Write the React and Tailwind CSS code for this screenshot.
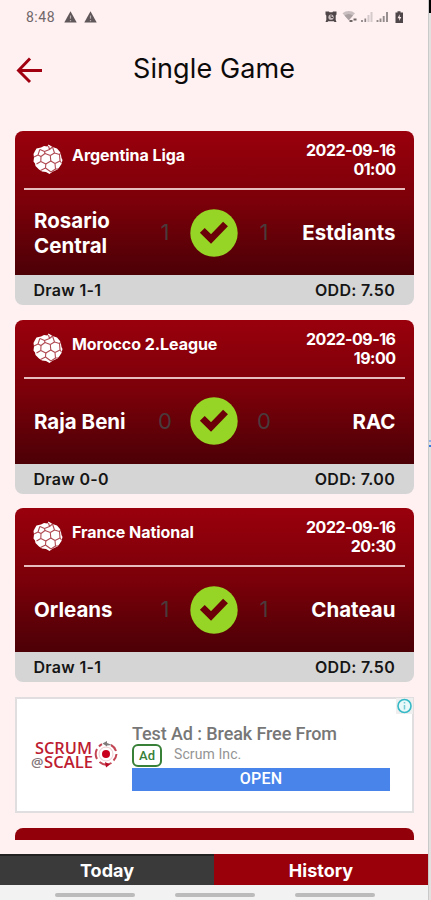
import React from 'react';

const games = [
    { league: 'Argentina Liga', time: '01:00', home: 'Rosario Central', away: 'Estdiants', score: [1, 1], odd: '7.50' },
    { league: 'Morocco 2.League', time: '19:00', home: 'Raja Beni', away: 'RAC', score: [0, 0], odd: '7.00' },
    { league: 'France National', time: '20:30', home: 'Orleans', away: 'Chateau', score: [1, 1], odd: '7.50' },
];

const WarningIcon = () => (
    <svg className="w-[13px] h-[12px]" viewBox="0 0 13 12">
        <path d="M6.5 0.3L12.7 11.6H0.3Z" fill="#5f5759" />
        <path d="M6.5 4.500v3.300M6.5 9v1.200" stroke="#b5aaac" strokeWidth="1.200" />
    </svg>
);

const StatusIcons = () => (
    <svg className="w-[80px] h-[14px]" viewBox="0 0 80 14">
        {/* alarm */}
        <path d="M0.5 1.500h3.500l0.500 0.800h3l0.500-0.800h3.500v3l-0.800 1v4.500l0.800 2h-2l-0.700-0.700h-5.600l-0.700 0.700h-2l0.800-2v-4.500l-0.800-1z" fill="#4e4648" />
        <circle cx="6" cy="7.200" r="2.600" fill="#c9bdbf" />
        <path d="M6 5v2.500h2" stroke="#4e4648" fill="none" />
        {/* wifi */}
        <path d="M17.500 3.200a10 10 0 0 1 12.500 0l-6.300 7z" fill="#c9bfc1" />
        <path d="M19.500 5.500a6.500 6.500 0 0 1 8.500 0l-4.200 4.700z" fill="#aaa0a2" />
        <path d="M24.500 11h3M28.500 9.500h3" stroke="#6e6567" strokeWidth="2" />
        {/* signals */}
        <path d="M37 12v-2M40.300 12v-3.500" stroke="#8b8284" strokeWidth="1.700" />
        <path d="M43.500 12V5M46.500 12V2" stroke="#d5cacc" strokeWidth="2" />
        <path d="M52.500 12v-2M55.500 12V8.500M58.700 12V6M62 12V2" stroke="#938a8c" strokeWidth="1.900" />
        {/* battery */}
        <path d="M72.500 1.200h3v1.300h2.500v10.500h-7.500v-10.500h2z" fill="#4e4648" />
        <path d="M74.700 4.300l-2.200 4h1.700v2.700l2.100-3.900h-1.600z" fill="#fbeaec" />
    </svg>
);

const BallIcon = () => (
    <svg className="w-[30px] h-[30px] shrink-0" viewBox="0 0 30 30" strokeLinejoin="round">
        {/* silhouette with the seams drawn over it */}
        <path d="M3.500 4.500L8 3.500 11 2 14.500 2.500 15.500 0.500 18 2 19.500 3 24 4.500 27 8 28 11 28.500 14 29.500 16 28.500 20 26.500 23 24.500 25.500 20 27.500 16.500 30 13 28 9 27.500 6 25.500 2.500 22 2 19.500 0.500 17.500 1 13.500 0.500 10 2 7z" fill="#fff" />
        <g fill="none" stroke="#b04a52" strokeWidth="1.100">
            <path d="M12 9.500L17.300 11.500 17.800 17 12.800 20 7.800 17.500 8 12.500z" />
            <path d="M12 9.500L11.500 7.500M11.500 7.500L7 5.500M11.500 7.500L16.500 5.500M16.500 5.500L15.500 2M16.500 5.500L19.500 3" />
            <path d="M8 12.500L5 11M5 11L6.800 5.500M5 11L1 13" />
            <path d="M17.300 11.500L21.500 9M21.500 9L19.500 3M21.500 9L26.500 10.500M26.500 10.500L28 9M26.500 10.500L27 17" />
            <path d="M17.800 17L22 19.500M22 19.500L27 17M27 17L28.500 19M22 19.500L22.500 25M22.500 25L18 28M22.500 25L25 25" />
            <path d="M12.800 20L12.500 24M12.500 24L7.500 26.500M12.500 24L18 28M7.800 17.500L3.500 20" />
        </g>
    </svg>
);

const CheckIcon = () => (
    <svg className="w-12 h-12 shrink-0" viewBox="0 0 48 48">
        <circle cx="24" cy="24" r="23.700" fill="#96d425" />
        <path d="M12.300 21.300L21 30 35.500 15" fill="none" stroke="#6c0008" strokeWidth="6.800" />
    </svg>
);

const GameCard = ({ game }) => (
    <div className="h-[174px] mb-[14.500px] rounded-[8px] overflow-hidden flex flex-col">
        <div className="h-[144px] px-[9px] bg-linear-to-b from-[#99000c] via-[#7b0009] to-[#4c0006] text-white flex flex-col">
            <div className="h-[59px] pl-[9px] pr-[9px] flex justify-between border-b-2 border-[#e6bcbf]">
                <div className="flex">
                    <div className="mt-[13px]"><BallIcon /></div>
                    <p className="ml-[9px] mt-[13px] text-[16px] leading-[22px] font-bold tracking-[-0.05px] whitespace-nowrap">{game.league}</p>
                </div>
                <div className="mt-[10px] text-[16px] leading-[19px] font-bold tracking-[-0.5px] text-right whitespace-nowrap">
                    <p>2022-09-16</p>
                    <p>{game.time}</p>
                </div>
            </div>
            <div className="h-[85px] pl-[10px] pr-[9px] flex items-center">
                <p className="w-[119px] text-[20.500px] leading-[25px] font-bold">{game.home}</p>
                <p className="w-[24px] text-[22px] text-center text-[#4a3a3c]">{game.score[0]}</p>
                <div className="ml-[13px] mr-[14px]"><CheckIcon /></div>
                <p className="w-[24px] text-[22px] text-center text-[#4a3a3c]">{game.score[1]}</p>
                <p className="flex-1 text-[20.500px] leading-[25px] font-bold text-right">{game.away}</p>
            </div>
        </div>
        <div className="h-[30px] px-[18.500px] bg-[#d5d5d5] text-[#151515] text-[16px] font-semibold flex items-center justify-between">
            <p className="tracking-[0.3px]">Draw {game.score.join('-')}</p>
            <p className="tracking-[0.3px]">ODD: {game.odd}</p>
        </div>
    </div>
);

const ScrumLogo = () => (
    <svg className="w-[90px] h-[32px] font-['Open_Sans',sans-serif] font-semibold" viewBox="0 0 90 32" fill="none">
        <text x="4" y="14" fontSize="16.500" textLength="57" lengthAdjust="spacingAndGlyphs" fill="#bd1c31">SCRUM</text>
        <text x="0" y="26.500" fontSize="13" textLength="12.500" lengthAdjust="spacingAndGlyphs" fill="#85787b">@</text>
        <text x="13" y="27.500" fontSize="16.500" textLength="49" lengthAdjust="spacingAndGlyphs" fill="#bd1c31">SCALE</text>
        <g transform="translate(63 0)">
            <circle cx="12" cy="14" r="4" fill="#c9001d" />
            <circle cx="12" cy="14" r="7" stroke="#e8bac1" strokeWidth="0.800" />
            <path d="M3 19a10.500 10.500 0 0 1 0-10M5 6.500a10.500 10.500 0 0 1 3-2.300M17 5a10.500 10.500 0 0 1 5 6M22.500 14a10.500 10.500 0 0 1-3 6.500M17.500 23a10.500 10.500 0 0 1-12-1" stroke="#c44655" strokeWidth="2" />
            <path d="M8.500 3.500L13 1v2l5 2-5 0.500v1z" fill="#817b7c" />
            <path d="M11 22l5 2.500-4 3z" fill="#b90823" />
        </g>
    </svg>
);

const AdBanner = () => (
    <div className="relative mt-[1.500px] h-[116px] bg-white border-2 border-[#e1dedf] flex pl-[14px] font-[Roboto,sans-serif]">
        <div className="w-[101px] pt-[41px]"><ScrumLogo /></div>
        <div className="w-[258px] pt-[24px]">
            <p className="text-[18px] leading-[21px] font-medium text-[#777] tracking-[-0.1px] whitespace-nowrap">Test Ad : Break Free From</p>
            <div className="flex items-center h-[24px]">
                <span className="w-[30px] h-[23px] rounded-[6px] border-2 border-[#388038] text-[#388038] text-[13px] font-medium flex items-center justify-center">Ad</span>
                <span className="ml-[12px] -mt-[2px] text-[14px] tracking-[0.1px] text-[#949494]">Scrum Inc.</span>
            </div>
            <div className="h-[23px] bg-[#4984eb] text-white text-[16px] font-medium tracking-[0.2px] flex items-center justify-center">OPEN</div>
        </div>
        <div className="absolute -right-[1px] -top-[1px] w-[17px] h-[16px] bg-[#eeeeee]">
            <svg viewBox="0 0 17 16" className="w-[17px] h-[16px]">
                <circle cx="8.500" cy="8" r="6.500" fill="#e9f8f9" stroke="#35b9c6" strokeWidth="1.600" />
                <path d="M8.500 7v4.500M8.500 4v1.500" stroke="#74ccd5" strokeWidth="1.500" />
            </svg>
        </div>
    </div>
);

const App = () => {
    return (
        <div className="w-[431px] h-[900px] overflow-hidden flex bg-[#e2e1df] font-[Inter,sans-serif]">
            <div className="w-[428px] shrink-0 h-full flex flex-col bg-[#fff0f1]">
                <div className="h-[34px] shrink-0 pl-[26px] pr-[23px] flex items-center text-[#706769]">
                    <span className="text-[14px] w-[38px] tracking-[0.5px] font-[Roboto,sans-serif]">8:48</span>
                    <WarningIcon />
                    <span className="w-[7px]" />
                    <WarningIcon />
                    <span className="flex-1" />
                    <StatusIcons />
                </div>
                <div className="relative h-[97px] shrink-0 flex justify-center">
                    <svg className="absolute left-[16px] top-[23px] w-[27px] h-[27px]" viewBox="0 0 27 27" fill="none" stroke="#a00010" strokeWidth="2.900">
                        <path d="M26 13.500H2.500M14 1.500L2.500 13.500L14 25" />
                    </svg>
                    <h1 className="mt-[18px] text-[27px] leading-[34px] tracking-[0.1px] text-[#0c0a0a]">Single Game</h1>
                </div>
                <div className="h-[709px] shrink-0 pl-[15px] pr-[14.500px] overflow-hidden">
                    {games.map((game) => (
                        <GameCard key={game.league} game={game} />
                    ))}
                    <AdBanner />
                    <div className="mt-[15px] h-[12px] rounded-t-[8px] bg-[#920009]" />
                </div>
                <div className="h-[31px] mt-[14px] shrink-0 flex text-white text-[18px] font-bold">
                    <div className="w-[214px] bg-[#3a3a3a] border-t-2 border-[#222] flex items-center justify-center">Today</div>
                    <div className="flex-1 bg-[#9a000a] flex items-center justify-center pt-px">History</div>
                </div>
                <div className="h-[15px] shrink-0 pt-[8px] pl-[55px] flex gap-[40px] bg-[#f2f2f2]">
                    <div className="w-[80px] h-[4px] rounded-full bg-[#bbb]" />
                    <div className="w-[80px] h-[4px] rounded-full bg-[#bbb]" />
                    <div className="w-[80px] h-[4px] rounded-full bg-[#bbb]" />
                </div>
            </div>
            <div className="w-[3px] h-full flex flex-col border-l border-[#c9c9c9]">
                <div className="h-[13px] bg-black" />
                <div className="mt-[427px] h-[2px] bg-[#90aee8]" />
                <div className="mt-[3px] h-[2px] bg-[#3978dd]" />
            </div>
        </div>
    );
};

export default App;
